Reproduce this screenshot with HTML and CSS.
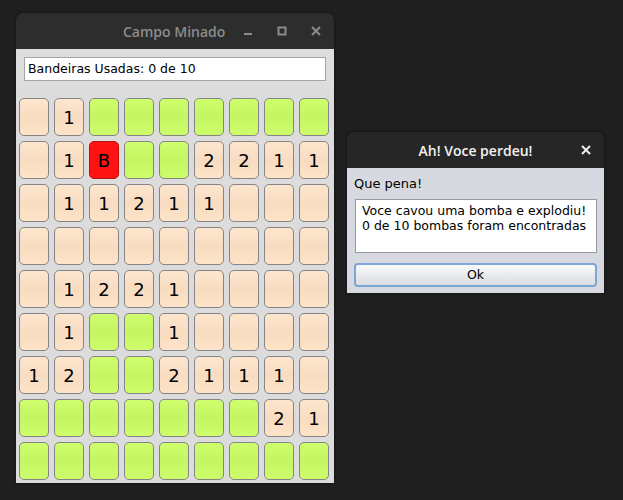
FILE: index.html
```html
<!DOCTYPE html>
<html>
<head>
<meta charset="utf-8">
<link rel="stylesheet" href="styles.css">
</head>
<body>
<div class="win main">
  <div class="titlebar">
    <span class="title">Campo Minado</span>
    <div class="controls">
      <svg class="ctl" width="14" height="14" viewBox="0 0 14 14"><rect x="3" y="9" width="8" height="2" fill="#8c8c8c"/></svg>
      <svg class="ctl" width="14" height="14" viewBox="0 0 14 14"><rect x="3.5" y="3.5" width="7" height="7" fill="none" stroke="#8c8c8c" stroke-width="2"/></svg>
      <svg class="ctl" width="14" height="14" viewBox="0 0 14 14"><path d="M3 3L11 11M11 3L3 11" stroke="#8c8c8c" stroke-width="2"/></svg>
    </div>
  </div>
  <div class="mbody">
    <div class="fieldrow"><div class="field">Bandeiras Usadas: 0 de 10</div></div>
    <div class="grid" id="grid"></div>
  </div>
</div>

<div class="win dialog">
  <div class="titlebar dtitle">
    <span class="title">Ah! Voce perdeu!</span>
    <svg class="dclose" width="14" height="14" viewBox="0 0 14 14"><path d="M3 3L11 11M11 3L3 11" stroke="#f0f0f0" stroke-width="2"/></svg>
  </div>
  <div class="dbody">
    <div class="msg">Que pena!</div>
    <div class="area">Voce cavou uma bomba e explodiu!<br>0 de 10 bombas foram encontradas</div>
    <div class="okbtn">Ok</div>
  </div>
</div>
<script>
var rows = [
 "p1ggggggg",
 "p1Bgg2211",
 "p11211ppp",
 "ppppppppp",
 "p1221pppp",
 "p1gg1pppp",
 "12gg2111p",
 "ggggggg21",
 "ggggggggg"
];
var g = document.getElementById('grid');
rows.forEach(function(r){
  for (var i=0;i<9;i++){
    var c=r[i], d=document.createElement('div');
    if(c==='g'){d.className='cell green';}
    else if(c==='B'){d.className='cell red';d.textContent='B';}
    else {d.className='cell peach'; if(c!=='p') d.textContent=c;}
    g.appendChild(d);
  }
});
</script>
</body>
</html>
```
FILE: styles.css
```css
html, body { margin: 0; padding: 0; }
body {
  width: 623px; height: 500px;
  background: #1f1f1f;
  position: relative;
  overflow: hidden;
  font-family: "DejaVu Sans", sans-serif;
}
.win {
  position: absolute;
  border-radius: 7px 7px 0 0;
  overflow: hidden;
  box-shadow: 0 0 3px rgba(0,0,0,0.6);
}
.main { left: 16px; top: 13px; width: 318px; height: 470px; }
.titlebar {
  height: 36px;
  background: #2d2d2d;
  display: flex;
  align-items: center;
  position: relative;
}
.title {
  font-family: "Open Sans", "Noto Sans", sans-serif;
  font-weight: 600;
  font-size: 14px;
  color: #8c8c8c;
}
.main .title { margin-left: 107px; }
.controls { display: flex; gap: 20px; margin-left: 16px; }
.mbody { background: #dedede; height: 434px; display: flex; flex-direction: column; }
.fieldrow { padding: 8px 8px 8px 8px; height: 24px; }
.field {
  background: #fff;
  border: 1px solid #a4a4a4;
  box-sizing: border-box;
  height: 24px;
  font-size: 12.5px;
  line-height: 22px;
  padding-left: 3px;
  color: #000;
}
.grid {
  border-top: 1px solid #d3d6de;
  background: #dcdcdc;
  padding: 8px 5px 3px 3px;
  display: grid;
  grid-template-columns: repeat(9, 30px);
  grid-auto-rows: 38px;
  gap: 5px;
}
.cell {
  border: 1px solid #858585;
  border-radius: 5px;
  box-sizing: border-box;
  display: flex; align-items: center; justify-content: center;
  font-size: 18px;
  color: #000;
}
.green { background: linear-gradient(#cffe6e, #c6f563 50%, #cefd6c); }
.peach { background: linear-gradient(#fde6cd, #f8dcc2 50%, #fde3c8); }
.red { background: #ff1212; border-color: #c01010; }

.dialog { left: 347px; top: 132px; width: 257px; height: 161px; }
.dtitle { background: #262626; justify-content: center; }
.dtitle .title { color: #f2f2f2; font-size: 14px; }
.dclose { position: absolute; right: 11px; top: 11px; }
.dbody {
  background: #d6d9df;
  height: 125px;
  padding: 8px 7px 0 7px;
  box-sizing: border-box;
  font-size: 13px;
}
.msg { height: 22px; line-height: 14px; margin-top: 1px; }
.area {
  margin-left: 1px;
  background: #fff;
  border: 1px solid #9a9a9a;
  height: 54px;
  box-sizing: border-box;
  padding: 3px 6px;
  line-height: 15px;
  font-size: 12.5px;
}
.okbtn {
  margin-top: 10px;
  height: 24px;
  box-sizing: border-box;
  border: 2px solid #7ba6d6;
  border-radius: 4px;
  background: linear-gradient(#fbfbfc, #e4e6ea 60%, #dcdee3);
  text-align: center;
  line-height: 20px;
  font-size: 12.5px;
}
```
